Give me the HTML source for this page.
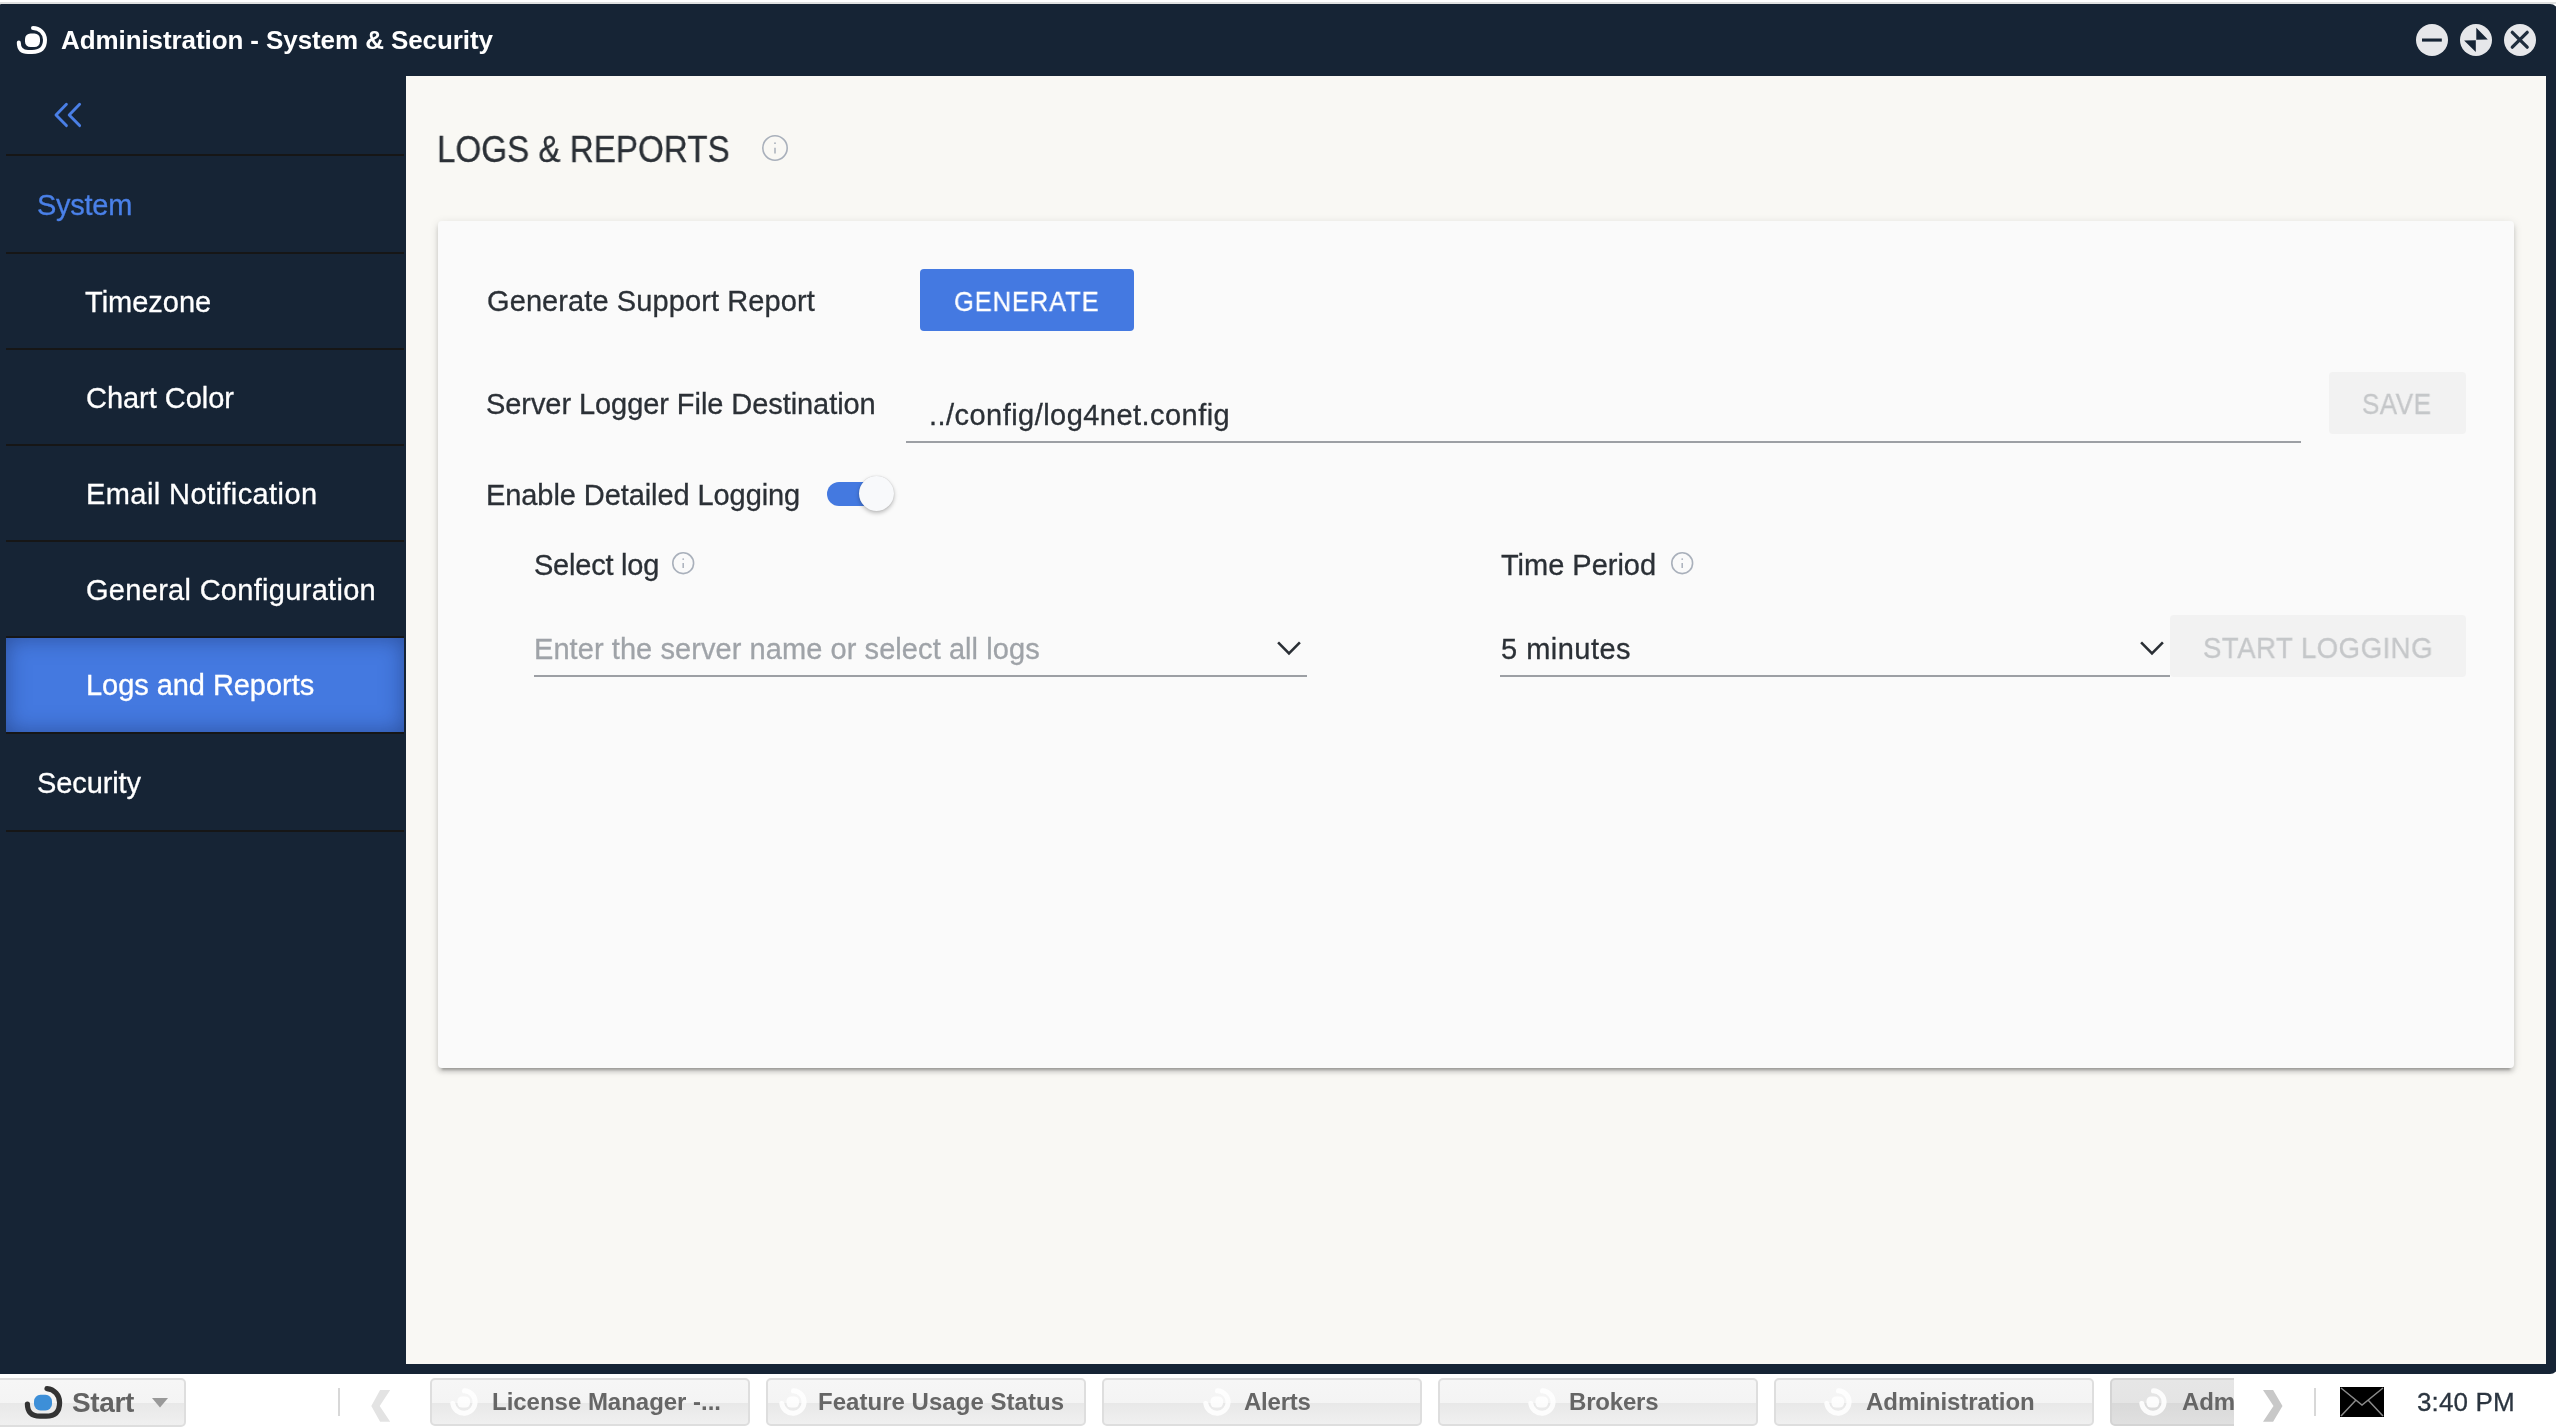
<!DOCTYPE html>
<html><head><meta charset="utf-8">
<style>
*{box-sizing:border-box;margin:0;padding:0}
html,body{width:2556px;height:1428px;overflow:hidden;background:#fff;font-family:"Liberation Sans",sans-serif}
.abs{position:absolute}
.tx{position:absolute;white-space:nowrap;line-height:normal;will-change:transform;-webkit-text-stroke:0.3px currentColor}
#topline{position:absolute;left:0;top:2px;width:2556px;height:2px;background:#dfe0e0}
#win{position:absolute;left:0;top:4px;width:2558px;height:1370px;background:#162435;border-radius:1px 8px 8px 0}
#content{position:absolute;left:406px;top:76px;width:2140px;height:1288px;background:#f9f8f4}
.sep{position:absolute;left:6px;width:398px;height:2px;background:#161616}
#active{position:absolute;left:6px;top:638px;width:398px;height:94px;background:#4479e0;box-shadow:inset 0 0 22px rgba(20,40,90,.5)}
#card{position:absolute;left:438px;top:221px;width:2076px;height:847px;background:#fafafa;border-radius:4px;box-shadow:0 4px 4px rgba(0,0,0,.14),0 6px 2px -4px rgba(0,0,0,.2),0 2px 10px rgba(0,0,0,.12)}
.btn{position:absolute;border-radius:4px}
.uline{position:absolute;height:2px;background:#9c9fa4}
#taskbar{position:absolute;left:0;top:1374px;width:2556px;height:54px;background:#fff}
.tb{position:absolute;top:1378px;height:48px;width:320px;border:2px solid #dedede;border-radius:5px;background:linear-gradient(#f6f6f6 0%,#f4f4f4 52%,#e8e8e8 52%,#f0f0f0 100%)}
.tsep{position:absolute;top:1388px;width:2px;height:28px;background:#d8d8d8}
</style></head><body>
<div id="topline"></div>
<div id="win"></div>
<svg class="abs" style="left:14px;top:24px;filter:blur(0.45px)" width="36" height="34" viewBox="0 0 36 34">
  <path d="M19 3.9 A12 12 0 0 1 31 15.8 Q31 28 18 28 L14 28 Q4.8 28 4.8 18.5" fill="none" stroke="#fff" stroke-width="4" stroke-linecap="round"/>
  <rect x="11" y="9.5" width="15" height="13.5" rx="5.5" fill="#fff"/>
</svg>
<div class="tx" style="left:60.6px;top:25px;font-size:26px;letter-spacing:-0.088px;color:#fff;font-weight:bold;-webkit-text-stroke:0;">Administration - System &amp; Security</div>
<svg class="abs" style="left:2414px;top:22px;filter:blur(0.3px)" width="130" height="36" viewBox="0 0 130 36">
  <circle cx="18" cy="18" r="16" fill="#e6e7ea"/>
  <rect x="8" y="16.5" width="19.8" height="3.1" fill="#162435"/>
  <circle cx="62" cy="18" r="16" fill="#e6e7ea"/>
  <path d="M62.3 5.8 L73.8 17.4 L62.3 17.8 Z M61.8 18.3 L50.1 18.5 L61.8 30 Z" fill="#162435"/>
  <circle cx="106" cy="18" r="16" fill="#e6e7ea"/>
  <path d="M98.3 10.3 L113.2 25.2 M113.2 10.3 L98.3 25.2" stroke="#1f2d3d" stroke-width="3.3" stroke-linecap="round"/>
</svg>

<div id="content"></div>

<svg class="abs" style="left:50px;top:100px" width="36" height="30" viewBox="0 0 36 30">
  <path d="M16.4 4.3 L6 14.9 L16.4 25.6 M29.6 4.3 L19.2 14.9 L29.6 25.6" fill="none" stroke="#4a7fe6" stroke-width="2.9" stroke-linecap="round" stroke-linejoin="round"/>
</svg>
<div class="sep" style="top:154px"></div>
<div class="tx" style="left:36.800000000000004px;top:189px;font-size:29px;letter-spacing:-0.28px;color:#4a80e8;">System</div>
<div class="sep" style="top:252px"></div>
<div class="tx" style="left:85.1px;top:286px;font-size:29px;letter-spacing:0.0px;color:#fff;">Timezone</div>
<div class="sep" style="top:348px"></div>
<div class="tx" style="left:86.0px;top:382px;font-size:29px;letter-spacing:-0.04px;color:#fff;">Chart Color</div>
<div class="sep" style="top:444px"></div>
<div class="tx" style="left:86.0px;top:478px;font-size:29px;letter-spacing:0.418px;color:#fff;">Email Notification</div>
<div class="sep" style="top:540px"></div>
<div class="tx" style="left:86.0px;top:574px;font-size:29px;letter-spacing:0.3px;color:#fff;">General Configuration</div>
<div class="sep" style="top:636px"></div>
<div id="active"></div>
<div class="tx" style="left:85.5px;top:669px;font-size:29px;letter-spacing:-0.053px;color:#fff;">Logs and Reports</div>
<div class="sep" style="top:732px"></div>
<div class="sep" style="top:830px"></div>
<div class="tx" style="left:37.2px;top:767px;font-size:29px;letter-spacing:-0.114px;color:#fff;">Security</div>

<div class="tx" style="left:437.0px;top:129px;font-size:36px;letter-spacing:0.0px;color:#2b3036;transform:scaleX(0.9219);transform-origin:0 0;">LOGS &amp; REPORTS</div>
<svg class="abs" style="left:760.4px;top:133.2px" width="30" height="30" viewBox="-15 -15 30 30">
  <circle cx="0" cy="0" r="12.2" fill="none" stroke="#a9b0bb" stroke-width="1.6"/>
  <circle cx="0" cy="-4.81" r="0.9" fill="#a9b0bb"/>
  <path d="M0 -0.26 V5.46" stroke="#a9b0bb" stroke-width="1.5"/>
</svg>
<div id="card"></div>
<div class="tx" style="left:486.8px;top:285px;font-size:29px;letter-spacing:0.1px;color:#2b3036;">Generate Support Report</div>
<div class="btn" style="left:920px;top:269px;width:214px;height:62px;background:#4479e1"></div>
<div class="tx" style="left:954.0px;top:286px;font-size:28px;letter-spacing:1.0px;color:#fff;transform:scaleX(0.91);transform-origin:0 0;">GENERATE</div>

<div class="tx" style="left:486.0px;top:388px;font-size:29px;letter-spacing:-0.069px;color:#2b3036;">Server Logger File Destination</div>
<div class="tx" style="left:928.8px;top:399px;font-size:29px;letter-spacing:0.456px;color:#2b3036;">../config/log4net.config</div>
<div class="uline" style="left:906px;top:441px;width:1395px"></div>
<div class="btn" style="left:2329px;top:372px;width:137px;height:62px;background:#f2f2f2"></div>
<div class="tx" style="left:2362.2px;top:388px;font-size:29px;letter-spacing:0.5px;color:#c5c7c9;transform:scaleX(0.8987);transform-origin:0 0;">SAVE</div>

<div class="tx" style="left:486.0px;top:479px;font-size:29px;letter-spacing:-0.082px;color:#2b3036;">Enable Detailed Logging</div>
<div class="abs" style="left:827px;top:482px;width:66px;height:24px;border-radius:12px;background:#4479e0"></div>
<div class="abs" style="left:859px;top:476px;width:35px;height:35px;border-radius:50%;background:#f8f9fb;box-shadow:0 2px 4px rgba(0,0,0,.26),0 0 1px rgba(0,0,0,.2)"></div>

<div class="tx" style="left:533.6px;top:549px;font-size:29px;letter-spacing:-0.222px;color:#2b3036;">Select log</div>
<svg class="abs" style="left:670.0px;top:550.0999999999999px" width="26.4" height="26.4" viewBox="-13.2 -13.2 26.4 26.4">
  <circle cx="0" cy="0" r="10.399999999999999" fill="none" stroke="#a9b0bb" stroke-width="1.6"/>
  <circle cx="0" cy="-4.14" r="0.9" fill="#a9b0bb"/>
  <path d="M0 -0.22 V4.70" stroke="#a9b0bb" stroke-width="1.5"/>
</svg>
<div class="tx" style="left:533.6px;top:633px;font-size:29px;letter-spacing:0.071px;color:#9fa3a8;">Enter the server name or select all logs</div>
<svg class="abs" style="left:1274px;top:632.5px" width="30" height="30" viewBox="-15 -15 30 30">
  <path d="M-10.9 -5.6 L0 5.3 L10.9 -5.6" fill="none" stroke="#2a2f35" stroke-width="2.6"/>
</svg>
<div class="uline" style="left:534px;top:675px;width:773px"></div>

<div class="tx" style="left:1500.6px;top:549px;font-size:29px;letter-spacing:-0.02px;color:#2b3036;">Time Period</div>
<svg class="abs" style="left:1669.1px;top:550.1999999999999px" width="26.4" height="26.4" viewBox="-13.2 -13.2 26.4 26.4">
  <circle cx="0" cy="0" r="10.399999999999999" fill="none" stroke="#a9b0bb" stroke-width="1.6"/>
  <circle cx="0" cy="-4.14" r="0.9" fill="#a9b0bb"/>
  <path d="M0 -0.22 V4.70" stroke="#a9b0bb" stroke-width="1.5"/>
</svg>
<div class="tx" style="left:1500.6px;top:633px;font-size:29px;letter-spacing:0.475px;color:#2b3036;">5 minutes</div>
<svg class="abs" style="left:2137px;top:632.5px" width="30" height="30" viewBox="-15 -15 30 30">
  <path d="M-10.9 -5.6 L0 5.3 L10.9 -5.6" fill="none" stroke="#2a2f35" stroke-width="2.6"/>
</svg>
<div class="uline" style="left:1500px;top:675px;width:670px"></div>
<div class="btn" style="left:2170px;top:615px;width:296px;height:62px;background:#f2f2f2"></div>
<div class="tx" style="left:2203.4px;top:632px;font-size:29px;letter-spacing:0.5px;color:#c5c7c9;transform:scaleX(0.9513);transform-origin:0 0;">START LOGGING</div>

<div id="taskbar"></div>
<div class="tb" style="left:-6px;width:192px;height:49px"></div>
<svg class="abs" style="left:20px;top:1383px;filter:blur(0.4px)" width="46" height="40" viewBox="0 0 46 40">
  <rect x="14" y="11.8" width="18" height="15.6" rx="6.5" fill="#3d8fd8"/>
  <path d="M27 5.6 A13.8 13.8 0 0 1 39.6 19.5 Q39.6 33.2 26 33.2 L20 33.2 Q7.4 33.2 7.4 21" fill="none" stroke="#333" stroke-width="5.2" stroke-linecap="round"/>
</svg>
<div class="tx" style="left:72.4px;top:1387px;font-size:28px;letter-spacing:-0.35px;color:#636363;font-weight:bold;-webkit-text-stroke:0;">Start</div>
<svg class="abs" style="left:151px;top:1397px" width="18" height="12" viewBox="0 0 18 12"><path d="M1 1 H17 L9 10.5 Z" fill="#999"/></svg>
<div class="tsep" style="left:338px"></div>
<svg class="abs" style="left:368px;top:1388px;filter:blur(0.5px)" width="26" height="36" viewBox="0 0 26 36"><path d="M12.1 2.1 L22.2 2.1 L11.7 17.9 L22.2 33.7 L12.1 33.7 L3.3 17.9 Z" fill="#e3e3e3"/></svg>

<div class="tb" style="left:430px"></div>
<svg class="abs" style="left:446.3px;top:1384px;opacity:0.9;filter:blur(0.7px)" width="36" height="36" viewBox="-18 -18 36 36">
  <path d="M0.5 -11.2 A11.2 11.2 0 1 1 -11.2 1.5" fill="none" stroke="#fff" stroke-width="5" stroke-linecap="round"/>
  <rect x="-6.5" y="-5.5" width="12.5" height="11" rx="4.5" fill="#fff"/>
</svg>
<div class="tx" style="left:491.6px;top:1388px;font-size:24px;letter-spacing:-0.021px;color:#666;font-weight:bold;-webkit-text-stroke:0;">License Manager -...</div>
<div class="tb" style="left:766px"></div>
<svg class="abs" style="left:775px;top:1384px;opacity:0.9;filter:blur(0.7px)" width="36" height="36" viewBox="-18 -18 36 36">
  <path d="M0.5 -11.2 A11.2 11.2 0 1 1 -11.2 1.5" fill="none" stroke="#fff" stroke-width="5" stroke-linecap="round"/>
  <rect x="-6.5" y="-5.5" width="12.5" height="11" rx="4.5" fill="#fff"/>
</svg>
<div class="tx" style="left:818.4px;top:1388px;font-size:24px;letter-spacing:0.031px;color:#666;font-weight:bold;-webkit-text-stroke:0;">Feature Usage Status</div>
<div class="tb" style="left:1102px"></div>
<svg class="abs" style="left:1199px;top:1384px;opacity:0.9;filter:blur(0.7px)" width="36" height="36" viewBox="-18 -18 36 36">
  <path d="M0.5 -11.2 A11.2 11.2 0 1 1 -11.2 1.5" fill="none" stroke="#fff" stroke-width="5" stroke-linecap="round"/>
  <rect x="-6.5" y="-5.5" width="12.5" height="11" rx="4.5" fill="#fff"/>
</svg>
<div class="tx" style="left:1244.2px;top:1388px;font-size:24px;letter-spacing:-0.24px;color:#666;font-weight:bold;-webkit-text-stroke:0;">Alerts</div>
<div class="tb" style="left:1438px"></div>
<svg class="abs" style="left:1524.4px;top:1384px;opacity:0.9;filter:blur(0.7px)" width="36" height="36" viewBox="-18 -18 36 36">
  <path d="M0.5 -11.2 A11.2 11.2 0 1 1 -11.2 1.5" fill="none" stroke="#fff" stroke-width="5" stroke-linecap="round"/>
  <rect x="-6.5" y="-5.5" width="12.5" height="11" rx="4.5" fill="#fff"/>
</svg>
<div class="tx" style="left:1569px;top:1388px;font-size:24px;letter-spacing:-0.2px;color:#666;font-weight:bold;-webkit-text-stroke:0;">Brokers</div>
<div class="tb" style="left:1774px"></div>
<svg class="abs" style="left:1820px;top:1384px;opacity:0.9;filter:blur(0.7px)" width="36" height="36" viewBox="-18 -18 36 36">
  <path d="M0.5 -11.2 A11.2 11.2 0 1 1 -11.2 1.5" fill="none" stroke="#fff" stroke-width="5" stroke-linecap="round"/>
  <rect x="-6.5" y="-5.5" width="12.5" height="11" rx="4.5" fill="#fff"/>
</svg>
<div class="tx" style="left:1866.0px;top:1388px;font-size:24px;letter-spacing:-0.053px;color:#666;font-weight:bold;-webkit-text-stroke:0;">Administration</div>
<div class="abs" style="left:2110px;top:1378px;width:124px;height:48px;overflow:hidden">
  <div class="tb" style="left:0;top:0;width:320px;background:linear-gradient(#e6e6e6 0%,#e4e4e4 52%,#d9d9d9 52%,#e0e0e0 100%);border-color:#d4d4d4"></div>
</div>
<svg class="abs" style="left:2135px;top:1384px;opacity:0.9;filter:blur(0.7px)" width="36" height="36" viewBox="-18 -18 36 36">
  <path d="M0.5 -11.2 A11.2 11.2 0 1 1 -11.2 1.5" fill="none" stroke="#fff" stroke-width="5" stroke-linecap="round"/>
  <rect x="-6.5" y="-5.5" width="12.5" height="11" rx="4.5" fill="#fff"/>
</svg>
<div class="abs" style="left:2110px;top:1378px;width:124px;height:48px;overflow:hidden">
  <div class="tx" style="left:72px;top:10px;font-size:24px;letter-spacing:-0.1px;color:#666;font-weight:bold;-webkit-text-stroke:0">Administration</div>
</div>
<svg class="abs" style="left:2259px;top:1388px;filter:blur(0.5px)" width="26" height="36" viewBox="0 0 26 36"><path d="M4 2.1 L14.1 2.1 L23.5 17.9 L14.1 33.7 L4 33.7 L14.5 17.9 Z" fill="#c8c8c8"/></svg>
<div class="tsep" style="left:2314px"></div>
<svg class="abs" style="left:2340px;top:1387px" width="44" height="30" viewBox="0 0 44 30">
  <rect x="0" y="0" width="44" height="30" fill="#000"/>
  <path d="M1 1 L22 18 L43 1 M1 29 L16 13 M43 29 L28 13" fill="none" stroke="#8a8a8a" stroke-width="1.5"/>
</svg>
<div class="tx" style="left:2417.0px;top:1387px;font-size:26px;letter-spacing:0.133px;color:#2b3540;">3:40 PM</div>
</body></html>
